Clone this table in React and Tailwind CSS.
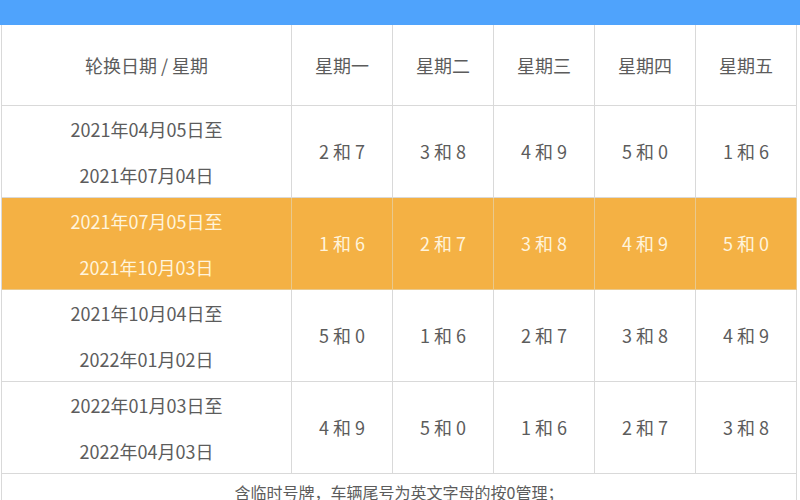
const headers = ['星期一', '星期二', '星期三', '星期四', '星期五']

const rows = [
  { from: '2021年04月05日至', to: '2021年07月04日', nums: ['2 和 7', '3 和 8', '4 和 9', '5 和 0', '1 和 6'] },
  { from: '2021年07月05日至', to: '2021年10月03日', nums: ['1 和 6', '2 和 7', '3 和 8', '4 和 9', '5 和 0'], active: true },
  { from: '2021年10月04日至', to: '2022年01月02日', nums: ['5 和 0', '1 和 6', '2 和 7', '3 和 8', '4 和 9'] },
  { from: '2022年01月03日至', to: '2022年04月03日', nums: ['4 和 9', '5 和 0', '1 和 6', '2 和 7', '3 和 8'] },
]

const font = { fontFamily: '"Noto Sans CJK SC", "Noto Sans", sans-serif' }

export default function App() {
  return (
    <div className="w-[800px] h-[500px] overflow-hidden bg-white" style={font}>
      <div className="h-[25px] bg-[#4fa3fc]" />
      <div className="ml-[1px] w-[796px] border-l border-[#d9d9d9] grid grid-cols-[290px_repeat(5,minmax(0,1fr))] text-[18px] text-[#5c5c5c]">
        <div className="h-[81px] flex items-center justify-center border-r border-b border-[#d9d9d9]">轮换日期 / 星期</div>
        {headers.map((h) => (
          <div key={h} className="h-[81px] flex items-center justify-center border-r border-b border-[#d9d9d9]">{h}</div>
        ))}
        {rows.map((r) => {
          const cell = r.active
            ? 'bg-[#f4b144] text-[#fff4dc] border-[#e9c98d]'
            : 'border-[#d9d9d9]'
          return (
            <div key={r.from} className="contents">
              <div className={`h-[92px] flex flex-col items-center justify-center gap-[18px] leading-[28px] border-r border-b ${cell}`}>
                <span>{r.from}</span>
                <span>{r.to}</span>
              </div>
              {r.nums.map((n, i) => (
                <div key={i} className={`h-[92px] flex items-center justify-center border-r border-b whitespace-pre ${cell}`}>{n}</div>
              ))}
            </div>
          )
        })}
        <div className="col-span-6 h-[40px] border-r border-[#d9d9d9] flex justify-center pt-[6px] text-[16px] leading-[24px]">
          含临时号牌，车辆尾号为英文字母的按0管理；
        </div>
      </div>
    </div>
  )
}
